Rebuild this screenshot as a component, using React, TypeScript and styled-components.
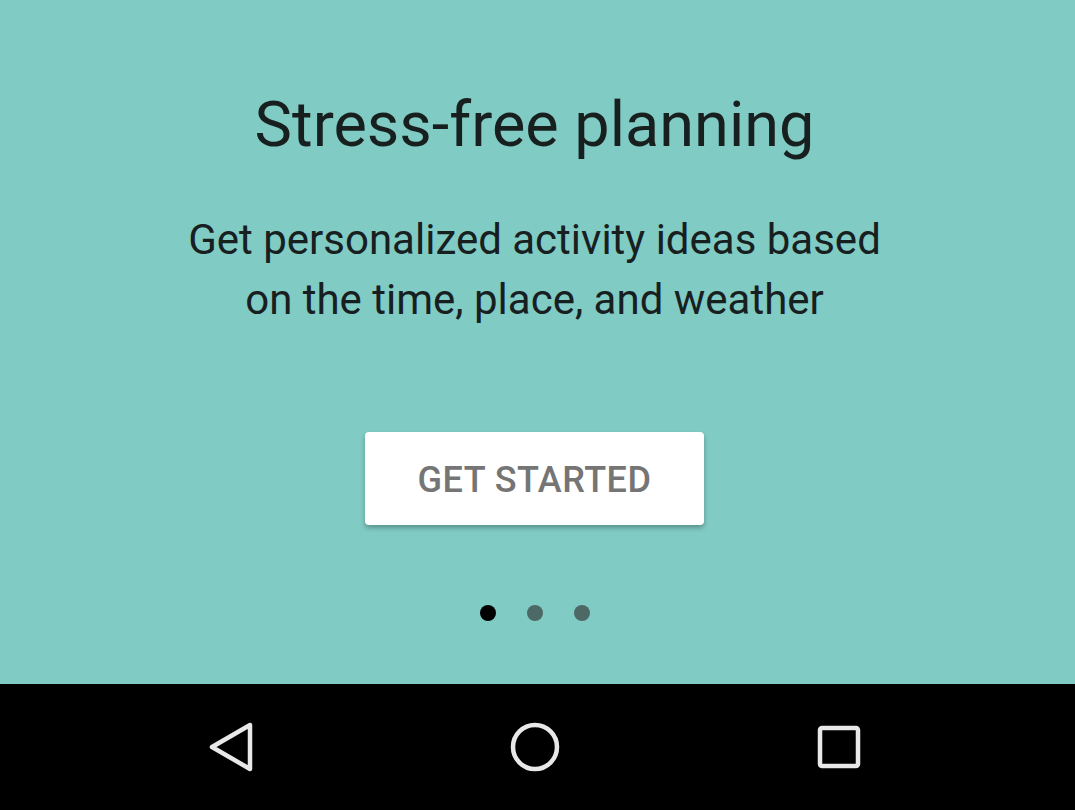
import React from "react";
import styled, { createGlobalStyle } from "styled-components";

const Global = createGlobalStyle`
  html, body { margin: 0; padding: 0; }
  body { font-family: Roboto, "Noto Sans", sans-serif; }
`;

const Screen = styled.div`
  width: 1075px;
  height: 810px;
  display: flex;
  flex-direction: column;
  overflow: hidden;
`;

const Content = styled.main`
  flex: 0 0 684px;
  background: #80cbc4;
  display: flex;
  flex-direction: column;
  align-items: center;
  padding: 88px 6px 0 0;
  box-sizing: border-box;
`;

const Title = styled.h1`
  margin: 0;
  font-family: Roboto, sans-serif;
  font-weight: 400;
  font-size: 63px;
  line-height: 74px;
  color: #17201f;
`;

const Body = styled.p`
  margin: 48px 0 0;
  font-family: Roboto, sans-serif;
  font-weight: 400;
  font-size: 42px;
  line-height: 60px;
  color: #17201f;
  text-align: center;
`;

const Button = styled.button`
  margin-top: 102px;
  width: 339px;
  height: 93px;
  border: none;
  border-radius: 4px;
  background: #ffffff;
  box-shadow: 0 3px 5px rgba(0, 0, 0, 0.28);
  font-family: Roboto, sans-serif;
  font-weight: 500;
  font-size: 36px;
  letter-spacing: 0.5px;
  color: #757575;
  padding-top: 3px;
  cursor: pointer;
`;

const Dots = styled.div`
  margin-top: 80px;
  display: flex;
  gap: 31px;
`;

const Dot = styled.span<{ $active?: boolean }>`
  width: 16px;
  height: 16px;
  border-radius: 50%;
  background: ${(p) => (p.$active ? "#000000" : "#4d6966")};
`;

const NavBar = styled.nav`
  flex: 0 0 126px;
  background: #000;
  display: flex;
  align-items: center;
  justify-content: center;
  gap: 244px;
  padding-right: 6px;
`;

const NavIcon = styled.div`
  width: 60px;
  height: 60px;
  display: flex;
  align-items: center;
  justify-content: center;
`;

export default function App() {
  return (
    <Screen>
      <Global />
      <Content>
        <Title>Stress-free planning</Title>
        <Body>
          Get personalized activity ideas based
          <br />
          on the time, place, and weather
        </Body>
        <Button>GET STARTED</Button>
        <Dots>
          <Dot $active />
          <Dot />
          <Dot />
        </Dots>
      </Content>
      <NavBar>
        <NavIcon>
          <svg width="60" height="60" viewBox="0 0 60 60">
            <path
              d="M49 8 L49 52 L11 30 Z"
              fill="none"
              stroke="#e8e8e8"
              strokeWidth="4.5"
              strokeLinejoin="round"
            />
          </svg>
        </NavIcon>
        <NavIcon>
          <svg width="60" height="60" viewBox="0 0 60 60">
            <circle cx="30" cy="30" r="22" fill="none" stroke="#e8e8e8" strokeWidth="4.5" />
          </svg>
        </NavIcon>
        <NavIcon>
          <svg width="60" height="60" viewBox="0 0 60 60">
            <rect x="11" y="11" width="38" height="38" rx="2" fill="none" stroke="#e8e8e8" strokeWidth="4.5" />
          </svg>
        </NavIcon>
      </NavBar>
    </Screen>
  );
}
